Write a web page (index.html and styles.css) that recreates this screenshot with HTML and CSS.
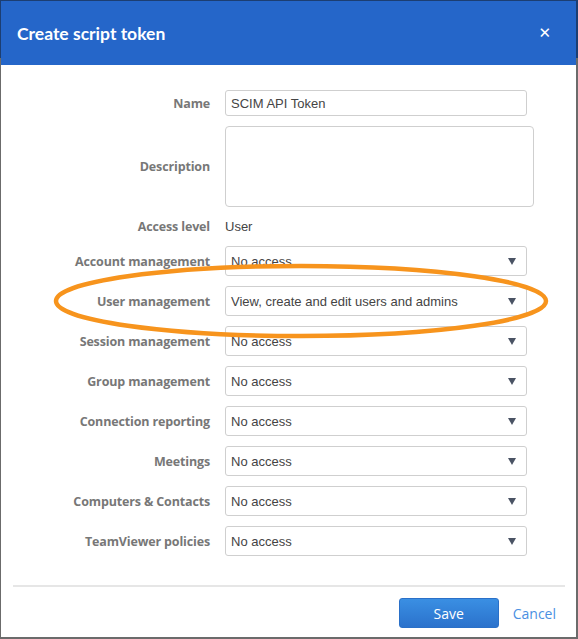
FILE: index.html
```html
<!DOCTYPE html>
<html>
<head>
<meta charset="utf-8">
<link rel="stylesheet" href="styles.css">
</head>
<body>
<div class="modal">
  <div class="modal-header">
    <h1 class="title">Create script token</h1>
    <span class="close">✕</span>
  </div>
  <div class="modal-body">
    <div class="form">
      <label class="lbl">Name</label>
      <div class="ctl"><div class="input">SCIM API Token</div></div>

      <label class="lbl">Description</label>
      <div class="ctl"><div class="textarea"></div></div>

      <label class="lbl lbl-short">Access level</label>
      <div class="ctl static">User</div>

      <label class="lbl">Account management</label>
      <div class="ctl"><div class="select">No access<span class="arrow"></span></div></div>

      <label class="lbl">User management</label>
      <div class="ctl"><div class="select">View, create and edit users and admins<span class="arrow"></span></div></div>

      <label class="lbl">Session management</label>
      <div class="ctl"><div class="select">No access<span class="arrow"></span></div></div>

      <label class="lbl">Group management</label>
      <div class="ctl"><div class="select">No access<span class="arrow"></span></div></div>

      <label class="lbl">Connection reporting</label>
      <div class="ctl"><div class="select">No access<span class="arrow"></span></div></div>

      <label class="lbl">Meetings</label>
      <div class="ctl"><div class="select">No access<span class="arrow"></span></div></div>

      <label class="lbl">Computers &amp; Contacts</label>
      <div class="ctl"><div class="select">No access<span class="arrow"></span></div></div>

      <label class="lbl">TeamViewer policies</label>
      <div class="ctl"><div class="select">No access<span class="arrow"></span></div></div>
    </div>
    <svg class="highlight" width="578" height="90" viewBox="0 0 578 90">
      <ellipse cx="300" cy="45" rx="245" ry="35" fill="none" stroke="#f7941d" stroke-width="4.5"/>
    </svg>
  </div>
  <div class="modal-footer">
    <button class="btn-save">Save</button>
    <a class="cancel">Cancel</a>
  </div>
</div>
</body>
</html>
```

FILE: styles.css
```css
html, body {
  margin: 0;
  padding: 0;
}
body {
  width: 578px;
  height: 639px;
  background: linear-gradient(#1c3e72 0, #1c3e72 58px, #6b6b6b 58px);
  overflow: hidden;
  font-family: "Liberation Sans", Arial, sans-serif;
}
.modal {
  margin: 1px 0 0 1px;
  width: 575px;
  height: 636px;
  background: #fff;
  display: flex;
  flex-direction: column;
  position: relative;
}
.modal-header {
  height: 64px;
  background: #2566c9;
  display: flex;
  align-items: center;
  justify-content: space-between;
  padding: 0 25px 0 16px;
  box-sizing: border-box;
}
.title {
  margin: 0;
  color: #fff;
  font-family: Lato, "Open Sans", sans-serif;
  font-weight: 700;
  font-size: 17.5px;
}
.close {
  color: #fff;
  font-family: "DejaVu Sans", sans-serif;
  font-size: 15px;
  font-weight: bold;
}
.modal-body {
  padding: 25px 0 0 0;
  position: relative;
  flex: 1;
}
.form {
  display: grid;
  grid-template-columns: 209px 1fr;
  column-gap: 15px;
  row-gap: 10px;
  align-items: center;
}
.lbl {
  text-align: right;
  color: #777;
  font-family: "Open Sans", sans-serif;
  font-weight: 700;
  font-size: 12.5px;
  letter-spacing: -0.15px;
  white-space: nowrap;
}
.ctl {
  display: flex;
}
.static {
  height: 19px;
  align-items: center;
  font-size: 13px;
  color: #444;
}
.input {
  width: 302px;
  height: 26px;
  box-sizing: border-box;
  border: 1px solid #cfcfcf;
  border-radius: 3px;
  padding: 0 5px;
  display: flex;
  align-items: center;
  font-size: 13px;
  color: #444;
}
.textarea {
  width: 309px;
  height: 81px;
  box-sizing: border-box;
  border: 1px solid #cfcfcf;
  border-radius: 4px;
}
.select {
  width: 302px;
  height: 30px;
  box-sizing: border-box;
  border: 1px solid #cfcfcf;
  border-radius: 3px;
  padding: 0 5px;
  display: flex;
  align-items: center;
  justify-content: space-between;
  font-size: 13px;
  color: #444;
}
.arrow {
  width: 0;
  height: 0;
  border-left: 4px solid transparent;
  border-right: 4px solid transparent;
  border-top: 7px solid #4a5364;
  margin-right: 5px;
}
.highlight {
  position: absolute;
  left: 0;
  top: 191px;
  pointer-events: none;
}
.modal-footer {
  margin: 0 11px 0 12px;
  border-top: 2px solid #e6e6e6;
  height: 50px;
  display: flex;
  align-items: center;
  justify-content: flex-end;
  padding-right: 9px;
  gap: 14px;
}
.btn-save {
  width: 100px;
  height: 30px;
  margin-top: 2px;
  border: 1px solid #2a70c8;
  border-radius: 3px;
  background: linear-gradient(#3a8fe3, #2b72cc);
  color: #fff;
  font-family: "Open Sans", sans-serif;
  font-size: 14px;
}
.cancel {
  color: #4a90e2;
  font-family: "Open Sans", sans-serif;
  font-size: 14px;
  margin-top: 2px;
}
```
